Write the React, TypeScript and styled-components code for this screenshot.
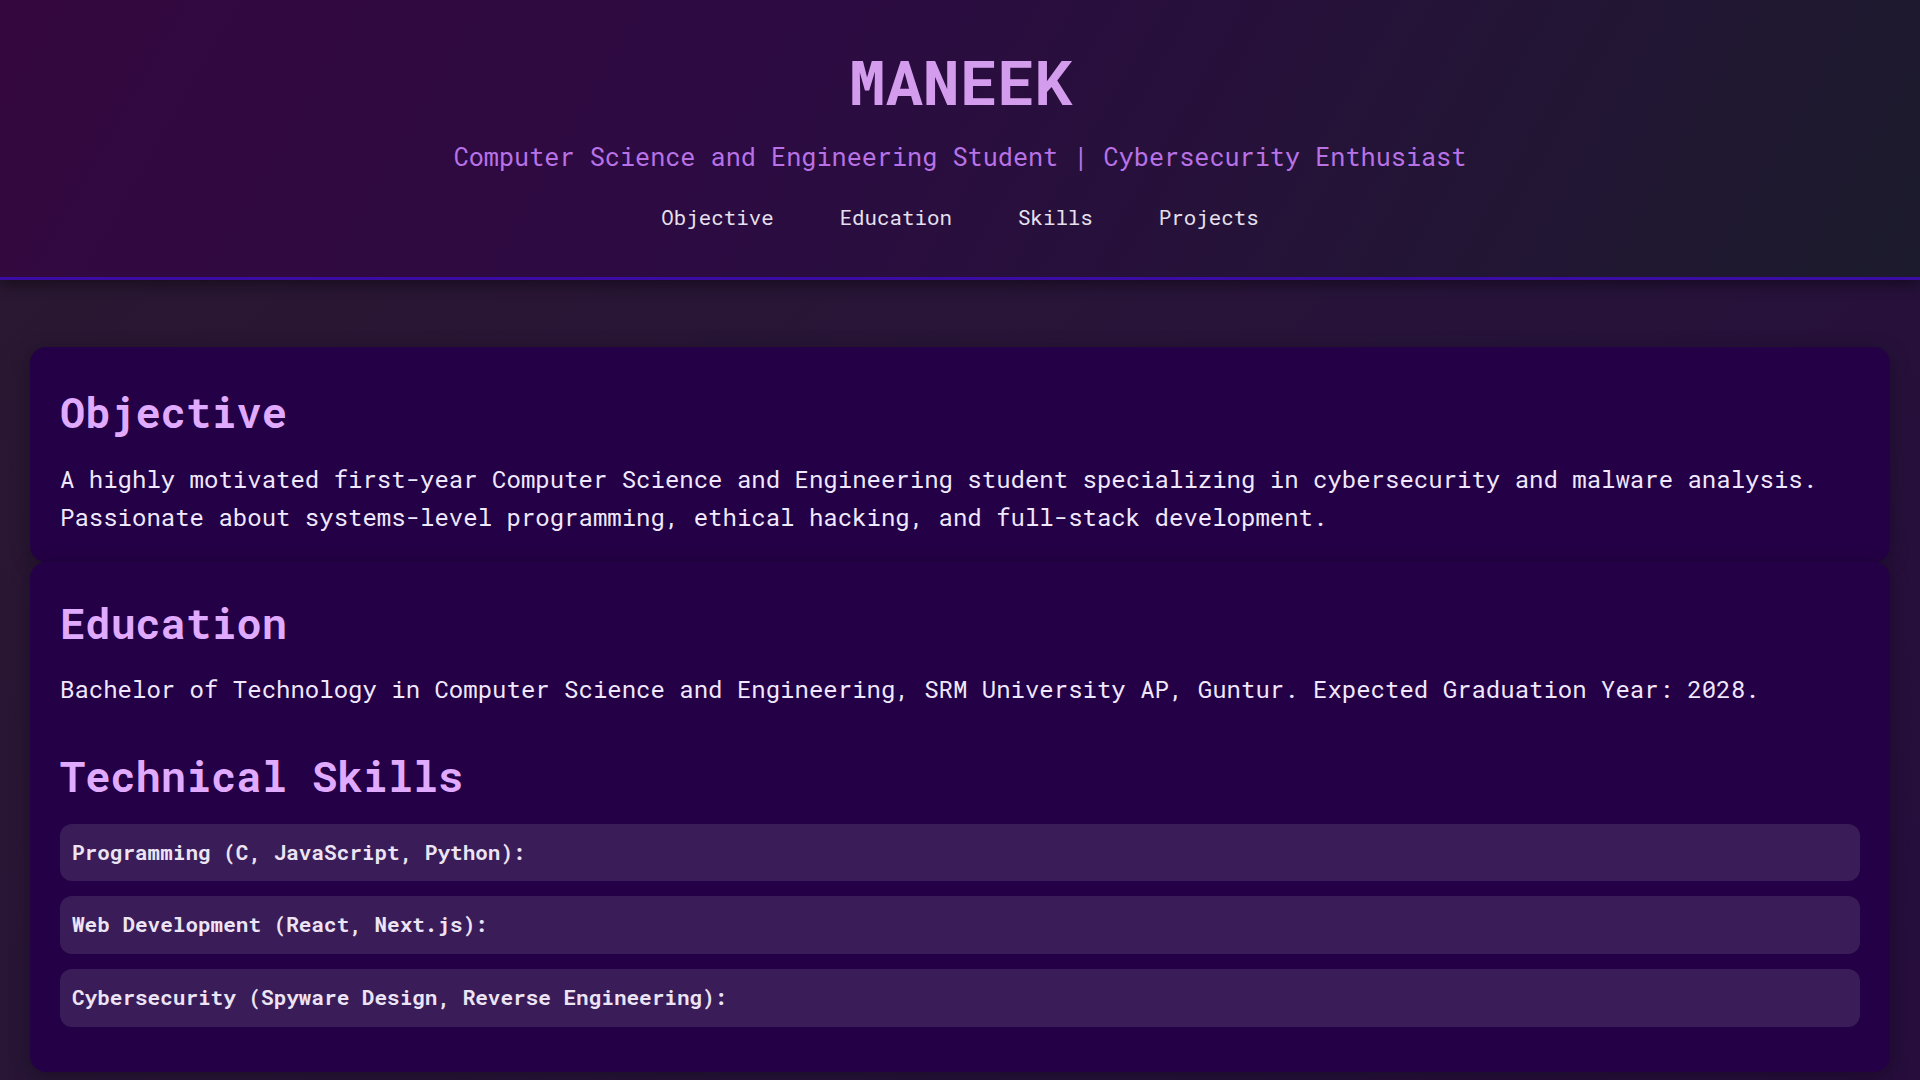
import styled, { createGlobalStyle } from 'styled-components';

const GlobalStyle = createGlobalStyle`
  html, body {
    margin: 0;
    padding: 0;
  }
  body {
    min-height: 100vh;
    background: linear-gradient(135deg, #2a1830 0%, #27133a 60%, #260d3c 100%);
    color: #f0e8ff;
    font-family: 'Roboto Mono', 'DejaVu Sans Mono', monospace;
  }
`;

const skills = [
  'Programming (C, JavaScript, Python):',
  'Web Development (React, Next.js):',
  'Cybersecurity (Spyware Design, Reverse Engineering):',
];

const navLinks = ['Objective', 'Education', 'Skills', 'Projects'];

const App = (): JSX.Element => {
  return (
    <>
      <GlobalStyle />
      <Header>
        <Title>MANEEK</Title>
        <Subtitle>
          Computer Science and Engineering Student | Cybersecurity Enthusiast
        </Subtitle>
        <Nav>
          {navLinks.map((link) => (
            <NavLink key={link} href={`#${link.toLowerCase()}`}>
              {link}
            </NavLink>
          ))}
        </Nav>
      </Header>
      <Main>
        <Card id='objective' $top={40} $bottom={25}>
          <SectionTitle>Objective</SectionTitle>
          <Text>
            A highly motivated first-year Computer Science and Engineering
            student specializing in cybersecurity and malware analysis.
            Passionate about systems-level programming, ethical hacking, and
            full-stack development.
          </Text>
        </Card>
        <Card id='education' $top={36} $bottom={30}>
          <SectionTitle>Education</SectionTitle>
          <Text>
            Bachelor of Technology in Computer Science and Engineering, SRM
            University AP, Guntur. Expected Graduation Year: 2028.
          </Text>
          <SectionTitle id='skills' $spaced>
            Technical Skills
          </SectionTitle>
          <SkillList>
            {skills.map((skill) => (
              <SkillItem key={skill}>{skill}</SkillItem>
            ))}
          </SkillList>
        </Card>
      </Main>
    </>
  );
};

const Header = styled.header`
  background: linear-gradient(120deg, #34083f 0%, #2c0b42 40%, #1c1b2c 100%);
  border-bottom: 3px solid #3a0ca3;
  box-shadow: 0 4px 14px rgba(0, 0, 0, 0.45);
  text-align: center;
  padding: 44px 20px 44px;
  position: relative;
  z-index: 1;
`;

const Title = styled.h1`
  margin: 0;
  font-size: 62px;
  line-height: 1.2;
  font-weight: 700;
  color: #d49cec;
`;

const Subtitle = styled.p`
  margin: 20px 0 0;
  font-size: 25.2px;
  line-height: 1.5;
  color: #b872e6;
`;

const Nav = styled.nav`
  display: flex;
  justify-content: center;
  gap: 66px;
  margin-top: 26px;
`;

const NavLink = styled.a`
  font-size: 20.8px;
  line-height: 1.5;
  color: #e6e0ee;
  text-decoration: none;
`;

const Main = styled.main`
  padding: 67px 30px 40px;
  display: flex;
  flex-direction: column;
`;

const Card = styled.section<{ $top: number; $bottom: number }>`
  background: #240046;
  border-radius: 16px;
  padding: ${(p) => p.$top}px 30px ${(p) => p.$bottom}px;
  box-shadow: 0 4px 20px rgba(0, 0, 0, 0.3);
`;

const SectionTitle = styled.h2<{ $spaced?: boolean }>`
  margin: ${(p) => (p.$spaced ? '43px' : '0')} 0 22px;
  font-size: 42px;
  line-height: 1.2;
  font-weight: 700;
  color: #e0aaff;
`;

const Text = styled.p`
  margin: 0;
  font-size: 24px;
  line-height: 1.6;
  color: #f0e8ff;
`;

const SkillList = styled.div`
  display: flex;
  flex-direction: column;
  gap: 15px;
  padding-bottom: 15px;
`;

const SkillItem = styled.div`
  background: #3a1c58;
  border-radius: 12px;
  padding: 12px;
  font-size: 21px;
  line-height: 1.6;
  font-weight: 700;
  color: #ece4f4;
`;

export default App;
